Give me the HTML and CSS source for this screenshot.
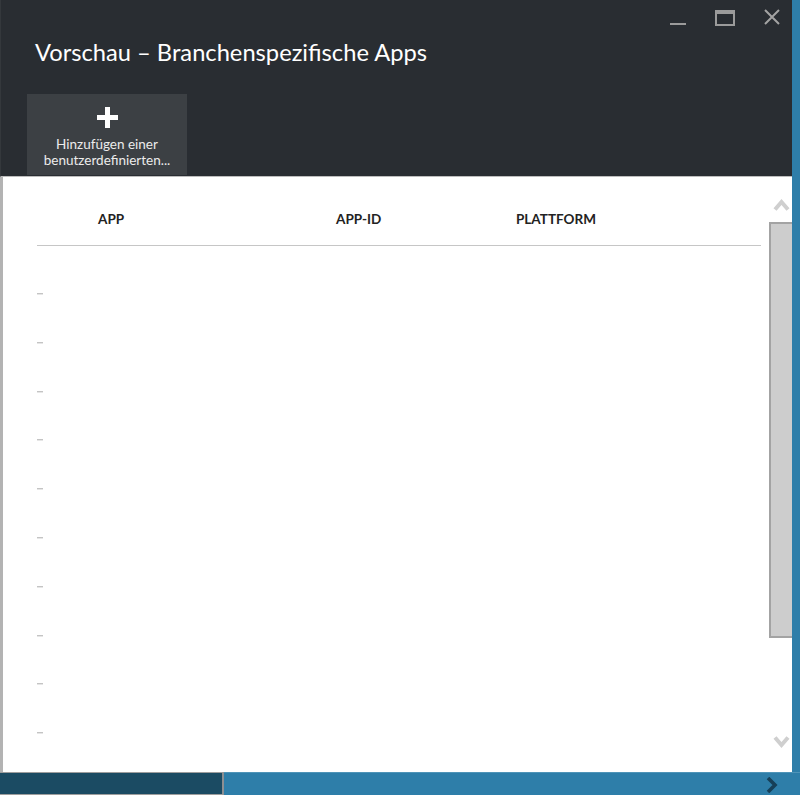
FILE: index.html
```html
<!DOCTYPE html>
<html lang="de">
<head>
<meta charset="utf-8">
<title>Vorschau – Branchenspezifische Apps</title>
<link rel="stylesheet" href="styles.css">
</head>
<body>
<div class="window">
  <div class="top">
    <div class="panel">
      <header class="header">
        <div class="controls">
          <span class="ctl ctl-min"><svg width="16" height="4" viewBox="0 0 16 4"><rect x="0" y="1" width="16" height="2" fill="#9b9b9b"/></svg></span>
          <span class="ctl ctl-max"><svg width="20" height="17" viewBox="0 0 20 17"><rect x="1" y="2" width="18" height="14" fill="none" stroke="#9b9b9b" stroke-width="2"/><rect x="1" y="1" width="18" height="4" fill="#9b9b9b"/></svg></span>
          <span class="ctl ctl-close"><svg width="16" height="16" viewBox="0 0 16 16"><path d="M1 1 L15 15 M15 1 L1 15" stroke="#a3a3a3" stroke-width="2" fill="none"/></svg></span>
        </div>
        <h1 class="title">Vorschau – Branchenspezifische Apps</h1>
        <div class="toolbar">
          <button class="tool-btn">
            <svg class="plus" width="21" height="21" viewBox="0 0 21 21"><path d="M8 0h5v8h8v5h-8v8H8v-8H0V8h8z" fill="#ffffff"/></svg>
            <span class="tool-label">Hinzufügen einer<br>benutzerdefinierten...</span>
          </button>
        </div>
      </header>
      <section class="body">
        <div class="content">
          <div class="thead">
            <span class="th">APP</span>
            <span class="th">APP-ID</span>
            <span class="th">PLATTFORM</span>
          </div>
          <div class="rows">
            <div class="row"><span class="dash"></span></div>
            <div class="row"><span class="dash"></span></div>
            <div class="row"><span class="dash"></span></div>
            <div class="row"><span class="dash"></span></div>
            <div class="row"><span class="dash"></span></div>
            <div class="row"><span class="dash"></span></div>
            <div class="row"><span class="dash"></span></div>
            <div class="row"><span class="dash"></span></div>
            <div class="row"><span class="dash"></span></div>
            <div class="row"><span class="dash"></span></div>
          </div>
        </div>
        <div class="scrollbar">
          <svg class="arrow-up" width="17" height="13" viewBox="0 0 17 13"><path d="M2 11.5 L8.5 4 L15 11.5" stroke="#cfcfcf" stroke-width="4" fill="none"/></svg>
          <div class="thumb"></div>
          <div class="track-rest"></div>
          <svg class="arrow-down" width="17" height="13" viewBox="0 0 17 13"><path d="M2 1.5 L8.5 9 L15 1.5" stroke="#cfcfcf" stroke-width="4" fill="none"/></svg>
        </div>
      </section>
    </div>
  </div>
  <footer class="bottom">
    <div class="bottom-dark"></div>
    <div class="bottom-blue">
      <svg class="chev" width="12" height="16" viewBox="0 0 12 16"><path d="M2 1 L9 8 L2 15" stroke="#163f57" stroke-width="3.6" fill="none"/></svg>
    </div>
  </footer>
</div>
</body>
</html>
```
FILE: styles.css
```css
* { box-sizing: border-box; }
html, body { margin: 0; padding: 0; }
body {
  width: 800px;
  height: 795px;
  overflow: hidden;
  font-family: "Open Sans", "Noto Sans", sans-serif;
  background: #2e7ea9;
}
.window {
  width: 800px;
  height: 795px;
  display: flex;
  flex-direction: column;
  background: #2e7ea9;
}
.top {
  height: 772px;
  flex-shrink: 0;
  display: flex;
}
.panel {
  width: 792px;
  display: flex;
  flex-direction: column;
}
.header {
  height: 177px;
  flex-shrink: 0;
  background: #292d32;
  border-left: 1px solid #34383c;
  border-bottom: 1px solid #bdbdbd;
  display: flex;
  flex-direction: column;
  position: relative;
}
.controls {
  position: absolute;
  top: 9px;
  right: 12px;
  display: flex;
  align-items: flex-start;
}
.ctl { display: block; }
.ctl svg { display: block; }
.ctl-min { margin-top: 13px; margin-right: 29px; }
.ctl-max { margin-right: 29px; }
.title {
  margin: 36px 0 0 34px;
  font-family: "Lato", "Open Sans", sans-serif;
  font-weight: 400;
  font-size: 23.7px;
  line-height: 32px;
  color: #ffffff;
}
.toolbar {
  margin-top: 26px;
  padding-left: 26px;
  display: flex;
}
.tool-btn {
  width: 160px;
  height: 81px;
  border: 0;
  margin: 0;
  padding: 13px 0 0 0;
  background: #3c4044;
  display: flex;
  flex-direction: column;
  align-items: center;
  font: inherit;
}
.plus { display: block; }
.tool-label {
  margin-top: 8px;
  font-family: "Lato", "Open Sans", sans-serif;
  font-size: 13.5px;
  line-height: 16px;
  color: #ececec;
  text-align: center;
}
.body {
  flex: 1;
  min-height: 0;
  overflow: hidden;
  background: #ffffff;
  border-left: 3px solid #b3b3b3;
  display: flex;
}
.content {
  flex: 1;
  padding: 0 8px 0 34px;
}
.thead {
  height: 69px;
  border-bottom: 1px solid #c6c6c6;
  display: grid;
  grid-template-columns: 238px 180px 1fr;
  align-items: center;
  padding-left: 61px;
  padding-top: 16px;
}
.th {
  font-family: "Lato", "Open Sans", sans-serif;
  font-weight: 700;
  font-size: 13.5px;
  color: #222222;
}
.rows {
  padding-top: 47px;
  display: flex;
  flex-direction: column;
}
.row {
  height: 48.8px;
  flex-shrink: 0;
}
.dash {
  display: block;
  width: 6px;
  height: 1px;
  background: #c4c4c4;
  box-shadow: 0 1px 0 #e6e6e6;
}
.scrollbar {
  width: 23px;
  display: flex;
  flex-direction: column;
}
.arrow-up {
  display: block;
  margin: 21px 0 0 4px;
}
.thumb {
  margin-top: 11px;
  height: 416px;
  background: #cdcdcd;
  border: 2px solid #a3a3a3;
  border-right: 0;
}
.track-rest { flex: 1; }
.arrow-down {
  display: block;
  margin: 0 0 23px 4px;
}
.bottom {
  height: 23px;
  display: flex;
}
.bottom-dark {
  width: 224px;
  background: #1b4b63;
  border-top: 1px solid #9e9e9e;
  border-right: 2px solid #8d8f92;
  border-bottom: 1px solid #9e9e9e;
}
.bottom-blue {
  flex: 1;
  background: #2e7ea9;
  border-top: 1px solid #4f94b8;
  display: flex;
  justify-content: flex-end;
  align-items: center;
  padding-right: 22px;
}
.chev { display: block; margin-top: 2px; }
```
